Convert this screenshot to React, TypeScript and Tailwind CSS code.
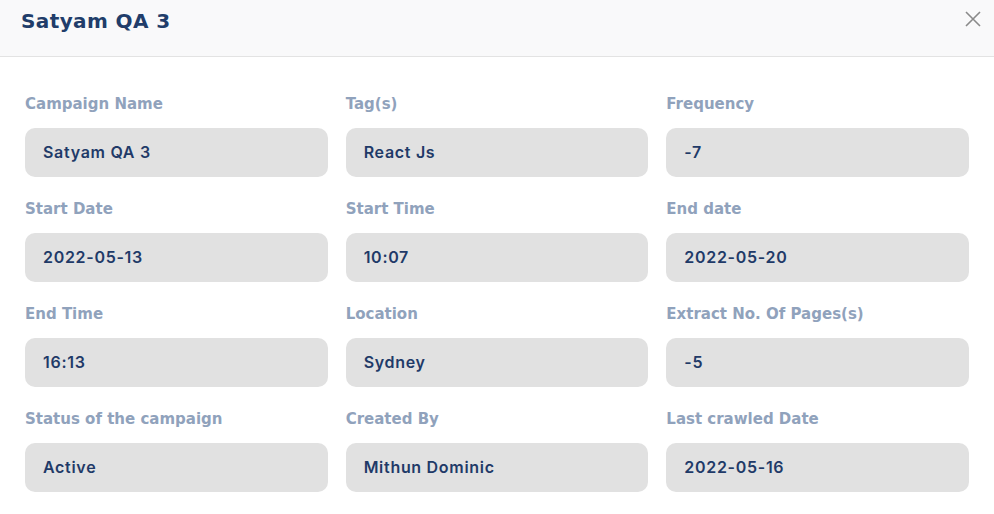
import React from "react";

const fields: [string, string][] = [
  ["Campaign Name", "Satyam QA 3"],
  ["Tag(s)", "React Js"],
  ["Frequency", "-7"],
  ["Start Date", "2022-05-13"],
  ["Start Time", "10:07"],
  ["End date", "2022-05-20"],
  ["End Time", "16:13"],
  ["Location", "Sydney"],
  ["Extract No. Of Pages(s)", "-5"],
  ["Status of the campaign", "Active"],
  ["Created By", "Mithun Dominic"],
  ["Last crawled Date", "2022-05-16"],
];

export default function App() {
  return (
    <div
      className="w-[994px] h-[514px] bg-white overflow-hidden"
      style={{ fontFamily: "'DejaVu Sans', sans-serif" }}
    >
      <div className="h-[57px] bg-[#f9f9fa] border-b border-[#e3e3e3] flex items-start justify-between pl-[21px] pr-[12px] pt-[6px]">
        <h1 className="text-[20px] leading-[30px] font-bold tracking-[0.4px] text-[#213d6a]">Satyam QA 3</h1>
        <button className="mt-[4px] w-[18px] h-[18px] flex items-center justify-center text-[#8a8a8a]">
          <svg width="16" height="16" viewBox="0 0 16 16" fill="none" stroke="currentColor" strokeWidth="1.6">
            <path d="M1 1L15 15M15 1L1 15" />
          </svg>
        </button>
      </div>
      <div className="px-[25px] pt-[36px] grid grid-cols-3 gap-x-[18px] gap-y-[21px]">
        {fields.map(([label, value]) => (
          <div key={label} className="flex flex-col">
            <div className="h-[22px] leading-[22px] text-[15px] font-bold text-[#90a2bc]">{label}</div>
            <div
              className="mt-[13px] h-[49px] rounded-[10px] bg-[#e1e1e1] flex items-center px-[18px] pb-[2px] text-[16px] font-semibold tracking-[0.7px] text-[#1f3a68]"
              style={{ fontFamily: "Inter, sans-serif" }}
            >
              {value}
            </div>
          </div>
        ))}
      </div>
    </div>
  );
}
